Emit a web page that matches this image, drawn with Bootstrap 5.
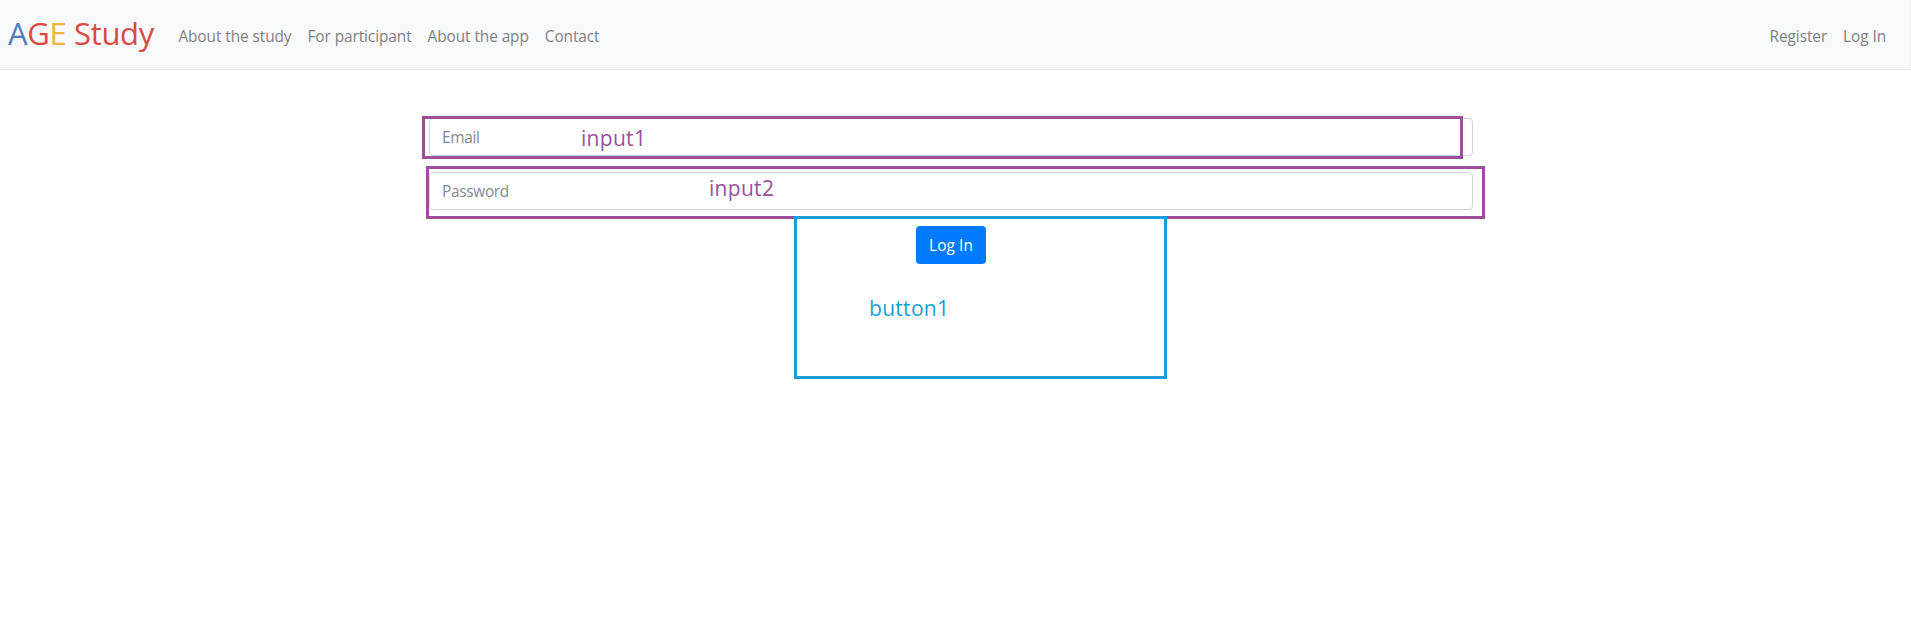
<!DOCTYPE html>
<html lang="en">
<head>
<meta charset="utf-8">
<meta name="viewport" content="width=device-width, initial-scale=1">
<title>AGE Study</title>
<link href="https://cdn.jsdelivr.net/npm/bootstrap@5.3.0/dist/css/bootstrap.min.css" rel="stylesheet">
<style>
body { font-family: "Open Sans", "Noto Sans", sans-serif; font-size: 15.4px; letter-spacing: -.3px; min-height: 641px; }
.site-bar { height: 70px; background: #f8f9fa; border: 1px solid #e7e8ea; border-width: 0 1px 1px 0; padding: 0 16px 0 8px; }
.site-bar .navbar-brand { font-size: 31px; line-height: 1; letter-spacing: -.35px; color: #d84a45; margin-right: 16.5px; padding: 0 0 3px; }
.c-blue { color: #527bbb; }
.c-gold { color: #f1b53d; }
.site-bar .nav-link { color: #808182; padding: 4px 8px 0; line-height: 24px; letter-spacing: -.08px; white-space: nowrap; }
.login-form { width: 1044px; margin: 48px 0 0 429px; gap: 16px; }
.login-form .form-control { height: 38px; font-size: inherit; letter-spacing: inherit; border-color: #ced4da; border-radius: 4px; padding: 6px 12px; }
.login-form .form-control::placeholder { color: #82898f; }
.btn-login { width: 70px; height: 38px; font-size: inherit; letter-spacing: .1px; padding: 2px 0 0; background: #007bff; color: #fff; border-radius: 4px; }
/* annotation frames lie over the form */
.note { position: absolute; border: 3px solid #9b4f9b; color: #9b4f9b; font-size: 21px; line-height: 24px; letter-spacing: .3px; pointer-events: none; }
.note span { position: absolute; }
.note-1 { left: 422px; top: 116px; width: 1041px; height: 43px; }
.note-1 span { left: 156px; top: 7px; }
.note-2 { left: 426px; top: 166px; width: 1059px; height: 53px; }
.note-2 span { left: 280px; top: 7px; }
.note-3 { left: 794px; top: 216px; width: 373px; height: 163px; border-color: #179fdb; color: #179fdb; }
.note-3 span { left: 72px; top: 77px; }
</style>
</head>
<body class="bg-white position-relative overflow-hidden">
<nav class="navbar navbar-expand site-bar">
  <a class="navbar-brand" href="#"><span class="c-blue">A</span>G<span class="c-gold">E</span> Study</a>
  <ul class="navbar-nav me-auto">
    <li class="nav-item"><a class="nav-link" href="#">About the study</a></li>
    <li class="nav-item"><a class="nav-link" href="#">For participant</a></li>
    <li class="nav-item"><a class="nav-link" href="#">About the app</a></li>
    <li class="nav-item"><a class="nav-link" href="#">Contact</a></li>
  </ul>
  <ul class="navbar-nav">
    <li class="nav-item"><a class="nav-link" href="#">Register</a></li>
    <li class="nav-item"><a class="nav-link" href="#">Log In</a></li>
  </ul>
</nav>
<form class="login-form d-flex flex-column">
  <input type="email" class="form-control" placeholder="Email" aria-label="Email">
  <input type="password" class="form-control" placeholder="Password" aria-label="Password">
  <button type="button" class="btn btn-login align-self-center">Log In</button>
</form>
<div class="note note-1"><span>input1</span></div>
<div class="note note-2"><span>input2</span></div>
<div class="note note-3"><span>button1</span></div>
<script src="https://cdn.jsdelivr.net/npm/bootstrap@5.3.0/dist/js/bootstrap.bundle.min.js"></script>
</body>
</html>
